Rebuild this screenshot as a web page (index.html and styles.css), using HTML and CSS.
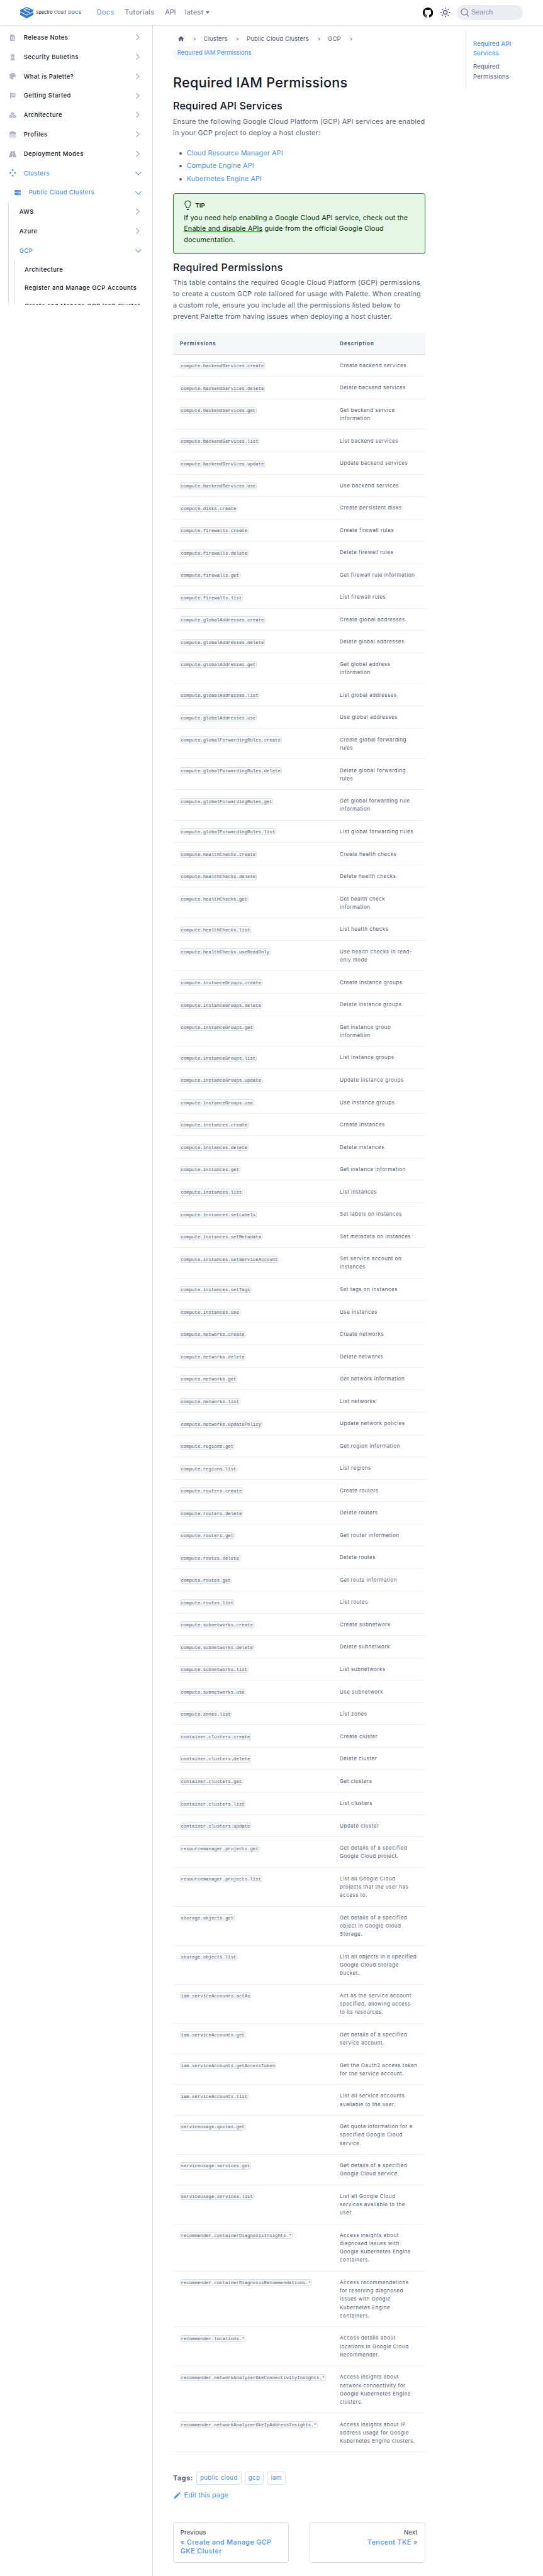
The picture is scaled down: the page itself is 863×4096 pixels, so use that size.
FILE: index.html
```
<!DOCTYPE html>
<html lang="en">
<head>
<meta charset="utf-8">
<title>Required IAM Permissions</title>
<link rel="stylesheet" href="styles.css">
</head>
<body>
<header class="navbar">
  <a class="brand">
    <svg class="logo" viewBox="0 0 31 27"><path fill="#3577d4" d="M15.500 0 31 7v12L15.500 27 0 19V7z"/><path d="M0 11.500l15.500 8 15.500-8M24 7.200 15.500 3.500 9 7l13.500 7" fill="none" stroke="#fff" stroke-width="1.700"/></svg>
    <span class="brand-name">spectro <span class="thin">cloud</span></span><span class="brand-docs">DOCS</span>
  </a>
  <nav class="nav-links"><a class="on">Docs</a><a>Tutorials</a><a class="api">API</a><a>latest<i class="caret"></i></a></nav>
  <div class="nav-right">
    <svg class="gh" viewBox="0 0 16 16"><path d="M8 0C3.580 0 0 3.580 0 8c0 3.540 2.290 6.530 5.470 7.590.4.070.55-.17.55-.38 0-.19-.01-.82-.01-1.490-2.010.37-2.530-.49-2.690-.94-.09-.23-.48-.94-.82-1.130-.28-.15-.68-.52-.01-.53.63-.01 1.080.58 1.230.82.72 1.210 1.870.87 2.330.66.07-.52.28-.87.51-1.070-1.780-.2-3.640-.89-3.640-3.950 0-.87.31-1.590.82-2.150-.08-.2-.36-1.020.08-2.120 0 0 .67-.21 2.200.82.64-.18 1.320-.27 2-.27s1.360.09 2 .27c1.530-1.040 2.200-.82 2.200-.82.44 1.100.16 1.920.08 2.120.51.56.82 1.270.82 2.150 0 3.070-1.870 3.750-3.650 3.950.29.25.54.73.54 1.480 0 1.070-.01 1.930-.01 2.200 0 .21.15.46.55.38A8.010 8.010 0 0 0 16 8c0-4.420-3.580-8-8-8z"/></svg>
    <svg class="sun" viewBox="0 0 24 24" fill="none" stroke="#4b5876" stroke-width="2" stroke-linecap="round"><circle cx="12" cy="12" r="4"/><path d="M12 2v2M12 20v2M2 12h2M20 12h2M5.300 5.300l1 1M17.700 17.700l1 1M5.300 18.700l1-1M17.700 6.300l1-1"/></svg>
    <div class="search"><svg viewBox="0 0 20 20" fill="none" stroke="#5f6b85" stroke-width="1.500" stroke-linecap="round"><circle cx="8.800" cy="8.800" r="7.400"/><path d="m14.300 14.300 4.400 4.400"/></svg><span>Search</span></div>
  </div>
</header>
<div class="layout">
  <aside class="sidebar">
    <ul class="menu">
      <li><svg class="ic" viewBox="0 0 24 24"><path d="M20 19.590V8l-6-6H6c-1.100 0-1.990.9-1.990 2L4 20c0 1.100.89 2 1.990 2H18c.45 0 .85-.15 1.190-.4l-4.430-4.430c-.8.52-1.740.83-2.760.83-2.760 0-5-2.240-5-5s2.240-5 5-5 5 2.240 5 5c0 1.020-.31 1.960-.83 2.750L20 19.590zM9 13c0 1.660 1.340 3 3 3s3-1.340 3-3-1.340-3-3-3-3 1.340-3 3z"/></svg><a>Release Notes</a><b class="chev"></b>
      <li><svg class="ic s" viewBox="0 0 16 16"><path d="M5.500.3h5l.4.700h2.300v1.800l-.8.700v3l-.8.500.8 7h2.300V16H1.300v-2h2.300l.8-7-.8-.5v-3l-.8-.7V1h2.300zM5.600 3.800v2h1.300v-2zm3.500 0v2h1.300v-2zM6 7.600l-.2 1.600L8 10.500l2.200-1.300L10 7.600zm-.4 4-.2 1.900L7 12.300zm4.800 0L9 12.300l1.600 1.200z"/></svg><a>Security Bulletins</a><b class="chev"></b>
      <li><svg class="ic s" viewBox="0 0 512 512"><path d="M512 256c0 .9 0 1.800 0 2.700c-.4 36.500-33.600 61.300-70.100 61.300H344c-26.500 0-48 21.500-48 48c0 3.400 .4 6.700 1 9.900c2.100 10.200 6.500 20 10.800 29.900c6.100 13.800 12.100 27.500 12.100 42c0 31.800-21.600 60.700-53.400 62c-3.500 .1-7 .2-10.600 .2C114.600 512 0 397.400 0 256S114.600 0 256 0S512 114.600 512 256zM128 288a32 32 0 1 0 -64 0 32 32 0 1 0 64 0zm0-96a32 32 0 1 0 0-64 32 32 0 1 0 0 64zM288 96a32 32 0 1 0 -64 0 32 32 0 1 0 64 0zm96 96a32 32 0 1 0 0-64 32 32 0 1 0 0 64z"/></svg><a>What is Palette?</a><b class="chev"></b>
      <li><svg class="ic s" viewBox="0 0 16 16"><path fill-rule="evenodd" d="M1.500.8v15.200h1.600V12c3-1 4.500-.3 6 .2 2 .6 3.600.4 5.900-.4V1.500c-2 .9-3.800 1-5.700.4C7.500 1.200 6 1 3.100 2V.8zM4 4l2-.4v2L4 6zm4-.3 2 .5v2l-2-.5zm4 .6 2-.4v2l-2 .4zM6 5.600l2 .1v2l-2-.1zm4 .6 2 .1v2l-2-.1zM4 8l2-.4v2L4 10zm4-.3 2 .5v2l-2-.5zm4 .6 2-.4v2l-2 .4z"/></svg><a>Getting Started</a><b class="chev"></b>
      <li><svg class="ic" viewBox="0 0 18 18"><g stroke="#fff" stroke-width=".6"><path d="m9 1.200 4.200 1.800v4.500L9 9.500 4.800 7.500V3zM4.800 7.800 9 9.700v4.800l-4.200 2.200L.6 14.500V9.700zM13.200 7.800l4.200 1.900v4.800l-4.200 2.200L9 14.500V9.700z"/></g><path d="M6.300 3.600 9 4.800l2.700-1.200M2.200 10.400l2.600 1.200 2.600-1.200M10.600 10.400l2.600 1.200 2.600-1.200M4.800 11.600v3M13.200 11.600v3" fill="none" stroke="#fff" stroke-width=".9"/></svg><a>Architecture</a><b class="chev"></b>
      <li><svg class="ic" viewBox="0 0 18 18"><path d="m9 .5 8.300 3.400v1.400L15.500 8H2.500L.7 5.300V3.900z"/><path d="m1 8 2 2.500h12L17 8M1 11l2 2.500h12l2-2.500M1 14l2 2.500h12l2-2.500" fill="none" stroke="#adb1c2" stroke-width="1.300"/></svg><a>Profiles</a><b class="chev"></b>
      <li><svg class="ic" viewBox="0 0 16 16"><path fill-rule="evenodd" d="M4 1.500h3.400v2.400h1.200V1.500H12l3.800 13H9v-3H7v3H.2zM7.200 5.500l-.2 3h2l-.2-3z"/></svg><a>Deployment Modes</a><b class="chev"></b>
      <li class="on"><svg class="ic" viewBox="0 0 18 20"><circle cx="9" cy="2.500" r="2.300"/><circle cx="9" cy="17" r="2.300"/><circle cx="3" cy="9.800" r="2.300"/><circle cx="15" cy="9.800" r="2.300"/></svg><a>Clusters</a><b class="chev open"></b>
      <li class="on l2"><svg class="ic s" viewBox="0 0 16 16"><path fill-rule="evenodd" d="M2 1.500h12a2 2 0 0 1 2 2v1.700a2 2 0 0 1-2 2H2a2 2 0 0 1-2-2V3.500a2 2 0 0 1 2-2zm8 2v1.700h1.500V3.500zm3 0v1.700h1.500V3.500zM2 8.800h12a2 2 0 0 1 2 2v1.700a2 2 0 0 1-2 2H2a2 2 0 0 1-2-2v-1.700a2 2 0 0 1 2-2zm8 2v1.700h1.500v-1.700zm3 0v1.700h1.500v-1.700z"/></svg><a>Public Cloud Clusters</a><b class="chev open"></b>
    </ul>
    <ul class="menu sub">
      <li><a>AWS</a><b class="chev"></b>
      <li><a>Azure</a><b class="chev"></b>
      <li class="on"><a>GCP</a><b class="chev open"></b>
      <li class="nest"><ul class="menu leaf"><li><a>Architecture</a><li><a>Register and Manage GCP Accounts</a><li><a>Create and Manage GCP IaaS Cluster</a></ul>
    </ul>
  </aside>
  <main class="content">
    <nav class="crumbs">
      <div class="crumb-row"><svg class="home" viewBox="0 0 24 24"><path d="M10 19v-5h4v5c0 .55.45 1 1 1h3c.55 0 1-.45 1-1v-7h1.700c.46 0 .68-.57.33-.87L12.670 3.600c-.38-.34-.96-.34-1.340 0l-8.360 7.530c-.34.3-.13.87.33.87H5v7c0 .55.45 1 1 1h3c.55 0 1-.45 1-1z"/></svg><i class="sep"></i><a>Clusters</a><i class="sep"></i><a>Public Cloud Clusters</a><i class="sep"></i><a>GCP</a><i class="sep"></i></div>
      <span class="current">Required IAM Permissions</span>
    </nav>
    <h1>Required IAM Permissions</h1>
    <h2>Required API Services</h2>
    <p class="text">Ensure the following Google Cloud Platform (GCP) API services are enabled<br>in your GCP project to deploy a host cluster:</p>
    <ul class="links"><li><a>Cloud Resource Manager API</a><li><a>Compute Engine API</a><li><a>Kubernetes Engine API</a></ul>
    <div class="tip">
      <div class="tip-head"><svg viewBox="0 0 12 16"><path fill-rule="evenodd" d="M6.500 0C3.480 0 1 2.190 1 5c0 .92.55 2.250 1 3 1.340 2.250 1.780 2.780 2 4v1h5v-1c.22-1.220.66-1.750 2-4 .45-.75 1-2.080 1-3 0-2.810-2.480-5-5.500-5zm3.640 7.480c-.25.44-.47.8-.67 1.110-.86 1.410-1.250 2.060-1.450 3.230-.02.05-.02.11-.02.17H5c0-.06 0-.13-.02-.17-.2-1.170-.59-1.830-1.450-3.230-.2-.31-.42-.67-.67-1.110C2.440 6.780 2 5.650 2 5c0-2.200 2.020-4 4.500-4 1.220 0 2.360.42 3.220 1.190C10.550 2.940 11 3.940 11 5c0 .66-.44 1.780-.86 2.480zM4 14h5c-.23 1.140-1.300 2-2.500 2s-2.270-.86-2.500-2z"/></svg>TIP</div>
      <p>If you need help enabling a Google Cloud API service, check out the<br><a>Enable and disable APIs</a> guide from the official Google Cloud<br>documentation.</p>
    </div>
    <h2 class="second">Required Permissions</h2>
    <p class="text">This table contains the required Google Cloud Platform (GCP) permissions<br>to create a custom GCP role tailored for usage with Palette. When creating<br>a custom role, ensure you include all the permissions listed below to<br>prevent Palette from having issues when deploying a host cluster.</p>
    <table class="perms">
      <thead><tr><th>Permissions<th>Description</thead>
      <tbody>
      <tr><td><code>compute.backendServices.create</code><td>Create backend services
      <tr><td><code>compute.backendServices.delete</code><td>Delete backend services
      <tr><td><code>compute.backendServices.get</code><td>Get backend service<br>information
      <tr><td><code>compute.backendServices.list</code><td>List backend services
      <tr><td><code>compute.backendServices.update</code><td>Update backend services
      <tr><td><code>compute.backendServices.use</code><td>Use backend services
      <tr><td><code>compute.disks.create</code><td>Create persistent disks
      <tr><td><code>compute.firewalls.create</code><td>Create firewall rules
      <tr><td><code>compute.firewalls.delete</code><td>Delete firewall rules
      <tr><td><code>compute.firewalls.get</code><td>Get firewall rule information
      <tr><td><code>compute.firewalls.list</code><td>List firewall rules
      <tr><td><code>compute.globalAddresses.create</code><td>Create global addresses
      <tr><td><code>compute.globalAddresses.delete</code><td>Delete global addresses
      <tr><td><code>compute.globalAddresses.get</code><td>Get global address<br>information
      <tr><td><code>compute.globalAddresses.list</code><td>List global addresses
      <tr><td><code>compute.globalAddresses.use</code><td>Use global addresses
      <tr><td><code>compute.globalForwardingRules.create</code><td>Create global forwarding<br>rules
      <tr><td><code>compute.globalForwardingRules.delete</code><td>Delete global forwarding<br>rules
      <tr><td><code>compute.globalForwardingRules.get</code><td>Get global forwarding rule<br>information
      <tr><td><code>compute.globalForwardingRules.list</code><td>List global forwarding rules
      <tr><td><code>compute.healthChecks.create</code><td>Create health checks
      <tr><td><code>compute.healthChecks.delete</code><td>Delete health checks
      <tr><td><code>compute.healthChecks.get</code><td>Get health check<br>information
      <tr><td><code>compute.healthChecks.list</code><td>List health checks
      <tr><td><code>compute.healthChecks.useReadOnly</code><td>Use health checks in read-<br>only mode
      <tr><td><code>compute.instanceGroups.create</code><td>Create instance groups
      <tr><td><code>compute.instanceGroups.delete</code><td>Delete instance groups
      <tr><td><code>compute.instanceGroups.get</code><td>Get instance group<br>information
      <tr><td><code>compute.instanceGroups.list</code><td>List instance groups
      <tr><td><code>compute.instanceGroups.update</code><td>Update instance groups
      <tr><td><code>compute.instanceGroups.use</code><td>Use instance groups
      <tr><td><code>compute.instances.create</code><td>Create instances
      <tr><td><code>compute.instances.delete</code><td>Delete instances
      <tr><td><code>compute.instances.get</code><td>Get instance information
      <tr><td><code>compute.instances.list</code><td>List instances
      <tr><td><code>compute.instances.setLabels</code><td>Set labels on instances
      <tr><td><code>compute.instances.setMetadata</code><td>Set metadata on instances
      <tr><td><code>compute.instances.setServiceAccount</code><td>Set service account on<br>instances
      <tr><td><code>compute.instances.setTags</code><td>Set tags on instances
      <tr><td><code>compute.instances.use</code><td>Use instances
      <tr><td><code>compute.networks.create</code><td>Create networks
      <tr><td><code>compute.networks.delete</code><td>Delete networks
      <tr><td><code>compute.networks.get</code><td>Get network information
      <tr><td><code>compute.networks.list</code><td>List networks
      <tr><td><code>compute.networks.updatePolicy</code><td>Update network policies
      <tr><td><code>compute.regions.get</code><td>Get region information
      <tr><td><code>compute.regions.list</code><td>List regions
      <tr><td><code>compute.routers.create</code><td>Create routers
      <tr><td><code>compute.routers.delete</code><td>Delete routers
      <tr><td><code>compute.routers.get</code><td>Get router information
      <tr><td><code>compute.routes.delete</code><td>Delete routes
      <tr><td><code>compute.routes.get</code><td>Get route information
      <tr><td><code>compute.routes.list</code><td>List routes
      <tr><td><code>compute.subnetworks.create</code><td>Create subnetwork
      <tr><td><code>compute.subnetworks.delete</code><td>Delete subnetwork
      <tr><td><code>compute.subnetworks.list</code><td>List subnetworks
      <tr><td><code>compute.subnetworks.use</code><td>Use subnetwork
      <tr><td><code>compute.zones.list</code><td>List zones
      <tr><td><code>container.clusters.create</code><td>Create cluster
      <tr><td><code>container.clusters.delete</code><td>Delete cluster
      <tr><td><code>container.clusters.get</code><td>Get clusters
      <tr><td><code>container.clusters.list</code><td>List clusters
      <tr><td><code>container.clusters.update</code><td>Update cluster
      <tr><td><code>resourcemanager.projects.get</code><td>Get details of a specified<br>Google Cloud project.
      <tr><td><code>resourcemanager.projects.list</code><td>List all Google Cloud<br>projects that the user has<br>access to.
      <tr><td><code>storage.objects.get</code><td>Get details of a specified<br>object in Google Cloud<br>Storage.
      <tr><td><code>storage.objects.list</code><td>List all objects in a specified<br>Google Cloud Storage<br>bucket.
      <tr><td><code>iam.serviceAccounts.actAs</code><td>Act as the service account<br>specified, allowing access<br>to its resources.
      <tr><td><code>iam.serviceAccounts.get</code><td>Get details of a specified<br>service account.
      <tr><td><code>iam.serviceAccounts.getAccessToken</code><td>Get the Oauth2 access token<br>for the service account.
      <tr><td><code>iam.serviceAccounts.list</code><td>List all service accounts<br>available to the user.
      <tr><td><code>serviceusage.quotas.get</code><td>Get quota information for a<br>specified Google Cloud<br>service.
      <tr><td><code>serviceusage.services.get</code><td>Get details of a specified<br>Google Cloud service.
      <tr><td><code>serviceusage.services.list</code><td>List all Google Cloud<br>services available to the<br>user.
      <tr><td><code>recommender.containerDiagnosisInsights.*</code><td>Access insights about<br>diagnosed issues with<br>Google Kubernetes Engine<br>containers.
      <tr><td><code>recommender.containerDiagnosisRecommendations.*</code><td>Access recommendations<br>for resolving diagnosed<br>issues with Google<br>Kubernetes Engine<br>containers.
      <tr><td><code>recommender.locations.*</code><td>Access details about<br>locations in Google Cloud<br>Recommender.
      <tr><td><code>recommender.networkAnalyzerGkeConnectivityInsights.*</code><td>Access insights about<br>network connectivity for<br>Google Kubernetes Engine<br>clusters.
      <tr><td><code>recommender.networkAnalyzerGkeIpAddressInsights.*</code><td>Access insights about IP<br>address usage for Google<br>Kubernetes Engine clusters.
      </tbody>
    </table>
    <div class="tags"><strong>Tags:</strong><a>public cloud</a><a>gcp</a><a>iam</a></div>
    <a class="edit"><svg viewBox="0 0 40 40"><path d="m34.500 11.700l-3 3.100-6.300-6.300 3.100-3q0.500-0.500 1.200-0.500t1.100 0.500l3.900 3.900q0.500 0.400 0.500 1.100t-0.500 1.200z m-29.500 17.100l18.400-18.500 6.300 6.300-18.400 18.400h-6.300v-6.200z"/></svg><span>Edit this page</span></a>
    <nav class="pager">
      <a><small>Previous</small><span>« Create and Manage GCP<br>GKE Cluster</span></a>
      <a class="next"><small>Next</small><span>Tencent TKE »</span></a>
    </nav>
  </main>
  <aside class="toc"><ul><li class="on">Required API<br>Services<li>Required<br>Permissions</ul></aside>
</div>
</body>
</html>
```
FILE: styles.css
```
/* 1rem equals ten design pixels */
html { font-size: 6.7422px; }
* { box-sizing: border-box; }
body { margin: 0; background: #fff; color: #515e77; font-family: Inter, "Open Sans", sans-serif; font-size: 1.6rem; line-height: 2.64rem; white-space: nowrap; }
ul { list-style: none; margin: 0; padding: 0; }
h1, h2, p { margin: 0; }
svg { display: block; flex: none; }

.navbar { display: flex; align-items: center; height: 6rem; padding: 0 4.8rem; box-shadow: 0 1px 2px rgba(0, 0, 0, .14); position: relative; }
.brand { display: flex; align-items: center; width: 18rem; }
.logo { width: 3.1rem; height: 2.7rem; margin-right: .6rem; }
.brand-name { font-size: 1.1rem; color: #111; width: 7.6rem; }
.thin { font-weight: 300; }
.brand-docs { font-size: 1rem; font-weight: 600; color: #3577d4; letter-spacing: .06rem; }
.nav-links { display: flex; gap: 2.5rem; color: #636e8f; letter-spacing: .06rem; }
.nav-links a { display: flex; align-items: center; }
.nav-links .api { letter-spacing: 0; margin-right: -.4rem; }
.on { color: #4a90f5; }
.caret { border: .55rem solid transparent; border-top: .65rem solid #636e8f; border-bottom: 0; margin-left: .5rem; }
.nav-right { display: flex; align-items: center; margin-left: auto; }
.gh { width: 2.4rem; height: 2.4rem; }
.sun { width: 2.6rem; height: 2.6rem; margin: 0 1.5rem; }
.search { display: flex; align-items: center; width: 15.5rem; height: 3.6rem; border-radius: 1.8rem; background: #ebedf2; padding-left: .8rem; font-family: "Liberation Sans", sans-serif; color: #7f88a3; }
.search svg { width: 2rem; height: 2rem; margin-right: .6rem; }

.layout { display: flex; height: 601.5rem; }
.sidebar { width: 36rem; flex: none; border-right: 1px solid #dadde1; padding-top: .6rem; font-size: 1.4rem; font-weight: 500; color: #121827; letter-spacing: .07rem; }
.menu li { display: flex; align-items: center; height: 4.57rem; padding-left: 2.1rem; padding-right: 2.4rem; }
.menu li.on { color: #4a90f5; }
.menu .l2 { padding-left: 3.3rem; letter-spacing: .055rem; }
.ic { width: 1.8rem; height: 1.8rem; margin-right: 1.7rem; fill: #adb1c2; }
.ic.s { width: 1.5rem; height: 1.5rem; margin: 0 1.85rem 0 .15rem; }
.on .ic { fill: #4a90f5; }
.chev { width: 1.1rem; height: 1.1rem; margin: 0 .7rem 0 auto; border: solid #9297ac; border-width: .22rem .22rem 0 0; transform: rotate(45deg); }
.chev.open { border-color: #4a90f5; transform: translateY(-.3rem) rotate(135deg); margin-right: .3rem; }
.menu.sub { margin-left: 2rem; border-left: 1px solid #dadde1; height: 24.3rem; overflow: hidden; }
.sub > li { padding-left: 2.4rem; }
.sub > .nest { padding: 0 0 0 1.2rem; height: auto; display: block; }
.leaf { border-left: 1px solid #dadde1; }
.leaf li { height: 4.3rem; padding: 0 0 0 2.3rem; }

.content { width: 59.4rem; margin-left: 4.8rem; padding-top: 1.5rem; flex: none; }
.crumbs { font-size: 1.4rem; height: 6.8rem; line-height: 3.4rem; letter-spacing: .025rem; }
.crumb-row { display: flex; align-items: center; height: 3.4rem; padding-left: 1rem; }
.home { width: 1.7rem; height: 1.7rem; fill: #515e77; }
.sep { width: .6rem; height: .6rem; border: solid #7f889c; border-width: .15rem .15rem 0 0; transform: rotate(45deg); margin: 0 2rem 0 1.9rem; }
.current { display: inline-block; border-radius: 1.7rem; background: #f6f8fa; color: #4a90f5; padding: 0 1rem; letter-spacing: .006rem; }
h1 { margin-top: 3.2rem; font-size: 3.2rem; line-height: 4rem; font-weight: 500; color: #121827; letter-spacing: .045rem; }
h2 { margin-top: 1.95rem; font-size: 2.4rem; line-height: 3rem; font-weight: 500; color: #121827; letter-spacing: .018rem; }
.text { margin-top: .98rem; letter-spacing: .033rem; }
.links { margin-top: 2.15rem; color: #4a90f5; letter-spacing: .023rem; }
.links li { display: flex; align-items: center; margin-bottom: .38rem; }
.links li::before { content: ""; width: .6rem; height: .6rem; border-radius: 50%; background: #515e77; margin: 0 1.2rem 0 1.4rem; }
.tip { margin-top: 1.97rem; height: 14.45rem; border: 1px solid #009400; border-radius: .6rem; background: #e6f6e6; color: #003100; padding: 1.5rem 2.4rem; letter-spacing: .022rem; }
.tip-head { display: flex; align-items: center; font-size: 1.4rem; font-weight: 600; }
.tip-head svg { width: 1.8rem; height: 2.2rem; margin-right: .9rem; fill: #003100; }
.tip p { margin-top: .3rem; }
.tip a { text-decoration: underline; text-decoration-color: #009400; text-underline-offset: .2rem; }
h2.second { margin-top: 1.55rem; letter-spacing: .052rem; }

.perms { width: 59.4rem; margin-top: 2.57rem; border-spacing: 0; table-layout: fixed; font-size: 1.2rem; line-height: 1.96rem; letter-spacing: .07rem; }
.perms th { height: 5rem; padding: 0 1.6rem; text-align: left; background: #f6f7f8; font-weight: 700; letter-spacing: .12rem; box-shadow: inset 0 -1px #dadde1; }
.perms th:first-child { width: 37.7rem; border-radius: .4rem 0 0 0; }
.perms th:last-child { border-radius: 0 .4rem 0 0; }
.perms td { padding: 1.66rem 1.6rem 1.652rem; vertical-align: top; box-shadow: inset 0 -1px #eff1f3; }
code { display: block; width: max-content; margin-top: .2rem; height: 1.65rem; line-height: 1.5rem; padding: 0 .1rem; border: 1px solid #dadde1; border-radius: .5rem; background: #f6f7f8; font-family: "Liberation Mono", monospace; font-size: 1.088rem; letter-spacing: 0; }

.tags { display: flex; align-items: center; gap: .78rem; margin-top: 4.6rem; height: 3rem; font-size: 1.44rem; color: #4a90f5; letter-spacing: .045rem; }
.tags strong { color: #515e77; font-size: 1.6rem; letter-spacing: .08rem; }
.tags a { height: 3rem; line-height: 2.8rem; border: 1px solid #dadde1; border-radius: .6rem; padding: 0 .74rem; }
.edit { display: flex; align-items: center; margin-top: 1.3rem; color: #4a90f5; letter-spacing: .015rem; }
.edit svg { width: 2rem; height: 2rem; margin-right: .6rem; fill: #4a90f5; }
.pager { display: grid; grid-template-columns: 1fr 1fr; gap: 4.8rem; margin-top: 4.85rem; }
.pager a { height: 9.6rem; border: 1px solid #dadde1; border-radius: .6rem; padding: 1.4rem 1.6rem; letter-spacing: .055rem; }
.pager small { display: block; font-size: 1.4rem; font-weight: 500; line-height: 2.2rem; color: #515761; letter-spacing: .03rem; }
.pager span { display: block; color: #4a90f5; font-weight: 500; line-height: 2rem; margin-top: .15rem; }
.pager .next { text-align: right; }

.toc { margin: 1.6rem 0 0 9.6rem; height: 13.2rem; width: 13rem; border-left: 1px solid #dadde1; padding: 1.57rem 0 0 1.6rem; font-size: 1.4rem; font-weight: 500; line-height: 2.3rem; color: #636e8f; letter-spacing: .03rem; }
.toc li { margin-bottom: .8rem; }
.toc .on { color: #4a90f5; }
```
